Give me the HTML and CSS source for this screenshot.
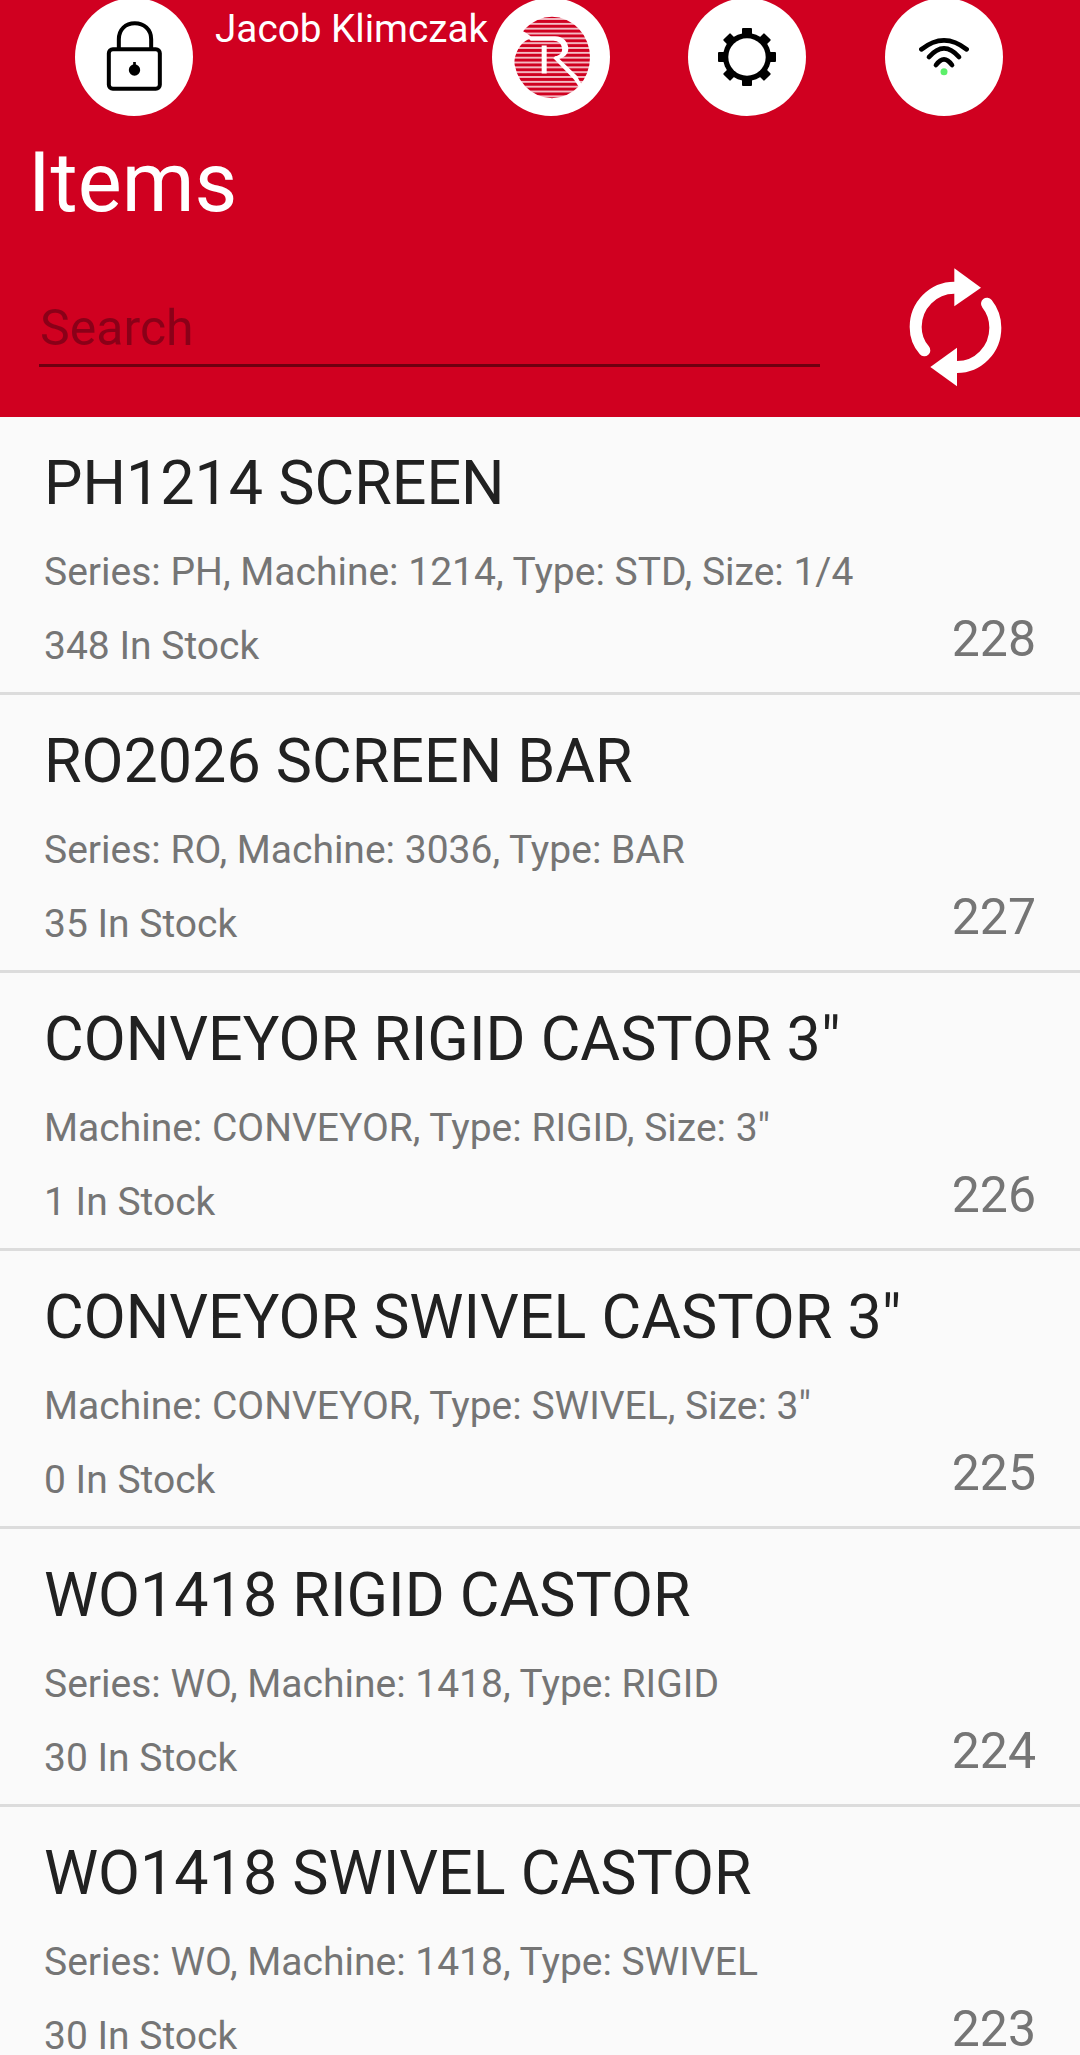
FILE: index.html
```html
<!DOCTYPE html>
<html lang="en">
<head>
<meta charset="utf-8">
<title>Items</title>
<link rel="stylesheet" href="styles.css">
</head>
<body>
<header class="header">
  <div class="toolbar">
    <div class="circle circle-lock">
      <svg class="icon" width="80" height="90" viewBox="10.500 8 240 270">
        <path d="M85 122V90C85 60 105 42 133 42C160 42 182 60 182 90V122" fill="none" stroke="#000" stroke-width="12"/>
        <rect x="55" y="120" width="153" height="118" rx="12" fill="none" stroke="#000" stroke-width="12"/>
        <circle cx="132" cy="182" r="17" fill="#000"/>
        <rect x="128" y="158" width="8" height="14" fill="#000"/>
      </svg>
    </div>
    <div class="user">Jacob Klimczak</div>
    <div class="circle circle-logo">
      <svg class="icon" width="95" height="105" viewBox="12 -1.500 285 315">
        <defs>
          <pattern id="stripes" width="285" height="14.500" patternUnits="userSpaceOnUse">
            <rect width="285" height="14.500" fill="#d00020"/>
            <rect y="9" width="285" height="5" fill="#f8d4da"/>
          </pattern>
        </defs>
        <ellipse cx="156" cy="156" rx="114" ry="122" fill="url(#stripes)"/>
        <path d="M30 60L42 68C58 70 76 78 92 92L92 100C70 105 50 125 42 170L30 170Z" fill="#fff"/>
        <path d="M80 92H165C190 92 205 110 205 130C205 148 190 158 178 160L232 212C240 232 250 244 265 250L240 250L222 222L160 158L165 152C180 150 188 140 186 128C184 115 175 106 160 106L92 106Z" fill="#fff"/>
        <rect x="125" y="120" width="15" height="84" fill="#fff"/>
      </svg>
    </div>
    <div class="circle circle-gear">
      <svg class="icon" width="58" height="58" viewBox="0 0 58 58">
        <g fill="#000">
          <rect x="24" y="0" width="10" height="58" rx="1"/>
          <rect x="24" y="0" width="10" height="58" rx="1" transform="rotate(45 29 29)"/>
          <rect x="24" y="0" width="10" height="58" rx="1" transform="rotate(90 29 29)"/>
          <rect x="24" y="0" width="10" height="58" rx="1" transform="rotate(135 29 29)"/>
        </g>
        <circle cx="29" cy="29" r="24" fill="#000"/>
        <circle cx="29" cy="29" r="18.700" fill="#fff"/>
      </svg>
    </div>
    <div class="circle circle-wifi">
      <svg class="icon" width="50" height="42" viewBox="0 0 50 42">
        <g fill="none" stroke="#000" stroke-width="4.700" stroke-linecap="round">
          <path d="M2.400 13.300Q25 -4.700 47.600 13.300"/>
          <path d="M10 21Q25 3.600 40 21"/>
          <path d="M17 29Q25 17.600 33 29"/>
        </g>
        <circle cx="25" cy="35.700" r="3.500" fill="#5cf06a"/>
      </svg>
    </div>
  </div>
  <h1 class="title">Items</h1>
  <div class="search-row">
    <div class="search">Search</div>
    <svg class="refresh" width="95" height="120" viewBox="85 50 285 360">
      <g fill="none" stroke="#fff" stroke-width="36" stroke-linecap="round">
        <path d="M224 112C160 112 108 165 108 230C108 258 118 282 134 300"/>
        <path d="M322 160C338 180 347 205 347 232C347 298 295 350 232 350"/>
      </g>
      <path d="M224 54L304 112L224 168Z" fill="#fff"/>
      <path d="M232 292L152 350L232 408Z" fill="#fff"/>
    </svg>
  </div>
</header>
<main class="list">
  <article class="row">
    <h2 class="name">PH1214 SCREEN</h2>
    <p class="meta">Series: PH, Machine: 1214, Type: STD, Size: 1/4</p>
    <div class="foot"><span class="stock">348 In Stock</span><span class="num">228</span></div>
  </article>
  <article class="row">
    <h2 class="name">RO2026 SCREEN BAR</h2>
    <p class="meta">Series: RO, Machine: 3036, Type: BAR</p>
    <div class="foot"><span class="stock">35 In Stock</span><span class="num">227</span></div>
  </article>
  <article class="row">
    <h2 class="name">CONVEYOR RIGID CASTOR 3"</h2>
    <p class="meta">Machine: CONVEYOR, Type: RIGID, Size: 3"</p>
    <div class="foot"><span class="stock">1 In Stock</span><span class="num">226</span></div>
  </article>
  <article class="row">
    <h2 class="name">CONVEYOR SWIVEL CASTOR 3"</h2>
    <p class="meta">Machine: CONVEYOR, Type: SWIVEL, Size: 3"</p>
    <div class="foot"><span class="stock">0 In Stock</span><span class="num">225</span></div>
  </article>
  <article class="row">
    <h2 class="name">WO1418 RIGID CASTOR</h2>
    <p class="meta">Series: WO, Machine: 1418, Type: RIGID</p>
    <div class="foot"><span class="stock">30 In Stock</span><span class="num">224</span></div>
  </article>
  <article class="row">
    <h2 class="name">WO1418 SWIVEL CASTOR</h2>
    <p class="meta">Series: WO, Machine: 1418, Type: SWIVEL</p>
    <div class="foot"><span class="stock">30 In Stock</span><span class="num">223</span></div>
  </article>
</main>
</body>
</html>
```
FILE: styles.css
```css
* { box-sizing: border-box; }
html, body { margin: 0; padding: 0; height: 2055px; overflow: hidden; }
body { background: #fafafa; font-family: Roboto, "Liberation Sans", sans-serif; }

.header { height: 417px; background: #d00020; color: #fff; display: flex; flex-direction: column; overflow: hidden; }
.toolbar { display: flex; align-items: flex-start; padding-left: 75px; height: 135px; margin-top: -2px; flex: none; }
.circle { width: 118px; height: 118px; border-radius: 50%; background: #fff; display: flex; align-items: center; justify-content: center; flex: none; }
.icon { display: block; }
.user { width: 299px; padding: 6px 0 0 22px; font-size: 38.700px; line-height: 50px; white-space: nowrap; flex: none; }
.circle-gear { margin-left: 78px; }
.circle-wifi { margin-left: 79px; }

.title { margin: 0; padding-left: 28px; font-size: 83px; font-weight: 400; line-height: 100px; flex: none; }

.search-row { display: flex; justify-content: space-between; align-items: flex-start; padding: 0 77px 0 39px; }
.search { width: 781px; height: 69px; margin-top: 65px; padding-left: 1px; border-bottom: 3px solid #6e0010; color: #8a0018; font-size: 50px; line-height: 60px; }
.refresh { margin-top: 34px; }

.row { height: 278px; padding: 0 44px; border-bottom: 3px solid #dcdcdc; display: flex; flex-direction: column; }
.name { margin: 0; padding-top: 29px; font-size: 61px; font-weight: 400; line-height: 74px; color: #212121; white-space: nowrap; }
.meta { margin: 0; padding-top: 27px; font-size: 39px; line-height: 50px; color: #757575; white-space: nowrap; }
.foot { display: flex; justify-content: space-between; align-items: flex-end; }
.stock { padding-top: 24px; font-size: 39px; line-height: 50px; color: #757575; }
.num { margin-bottom: 3px; font-size: 50px; line-height: 58px; color: #757575; }
```
